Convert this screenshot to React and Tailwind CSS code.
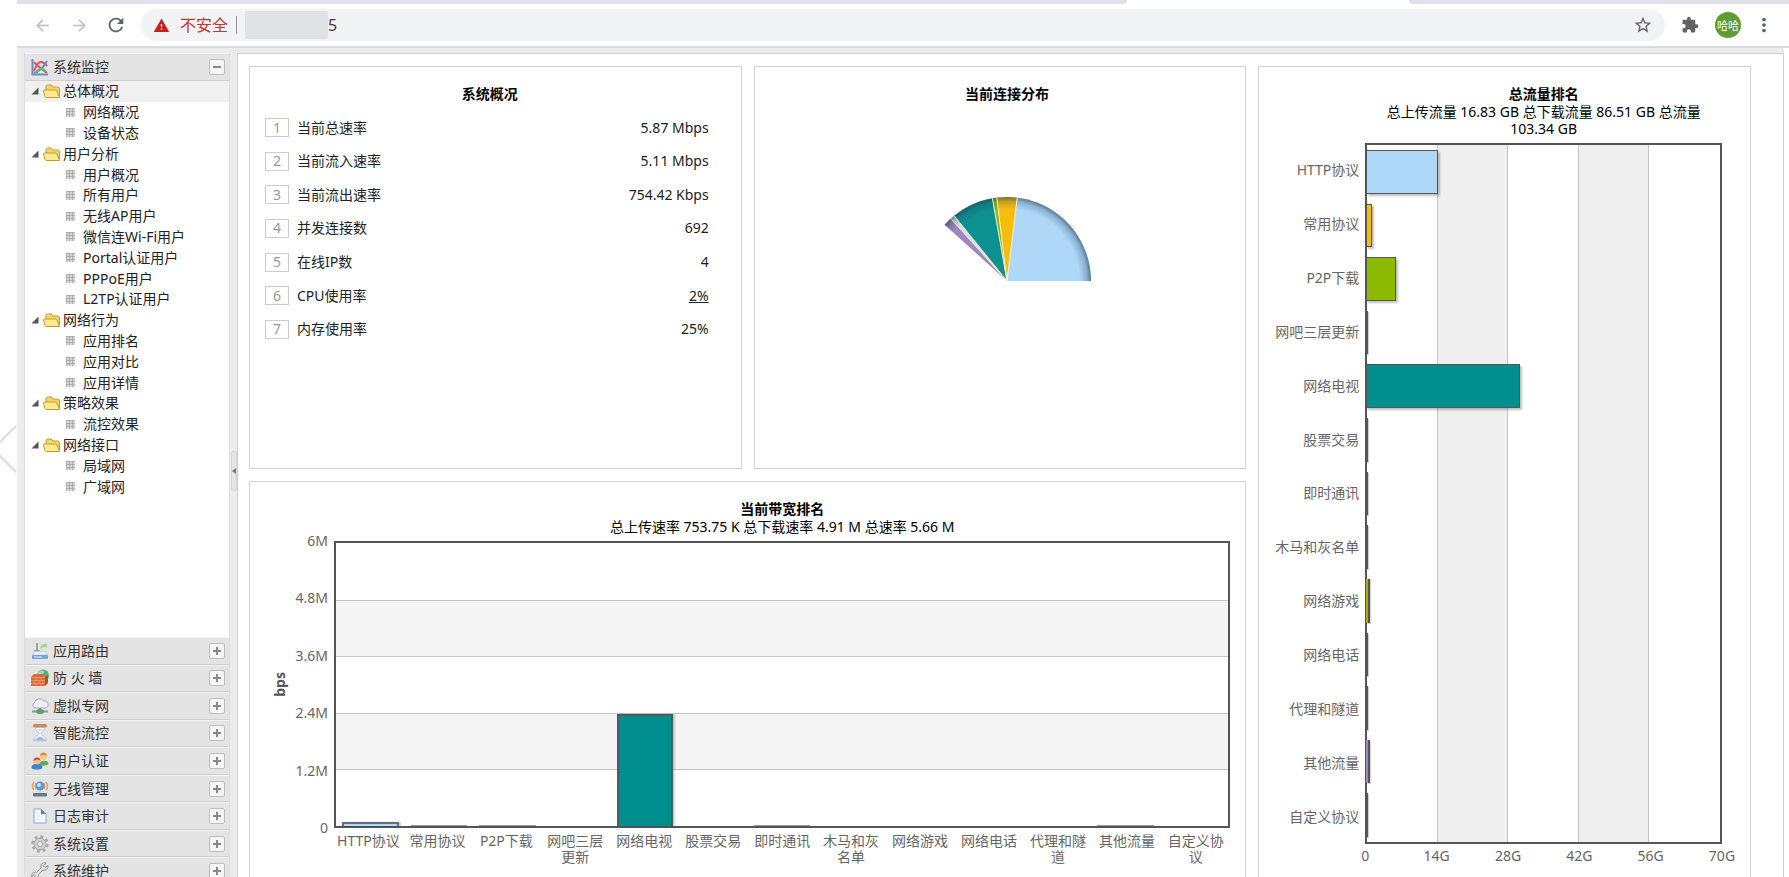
// src/App.jsx
//
// Router traffic console: browser toolbar on top, accordion menu on the
// left, overview cards and protocol charts on the right.

import {
  MdArrowBack, MdArrowForward, MdRefresh, MdWarning, MdStarOutline,
  MdExtension, MdMoreVert,
} from 'react-icons/md'

const TREE = [
  { label: '总体概况', folder: true, active: true },
  { label: '网络概况' },
  { label: '设备状态' },
  { label: '用户分析', folder: true },
  { label: '用户概况' },
  { label: '所有用户' },
  { label: '无线AP用户' },
  { label: '微信连Wi-Fi用户' },
  { label: 'Portal认证用户' },
  { label: 'PPPoE用户' },
  { label: 'L2TP认证用户' },
  { label: '网络行为', folder: true },
  { label: '应用排名' },
  { label: '应用对比' },
  { label: '应用详情' },
  { label: '策略效果', folder: true },
  { label: '流控效果' },
  { label: '网络接口', folder: true },
  { label: '局域网' },
  { label: '广域网' },
]

const SECTIONS = [
  { label: '应用路由', icon: RouteIcon },
  { label: '防 火 墙', icon: FirewallIcon },
  { label: '虚拟专网', icon: CloudIcon },
  { label: '智能流控', icon: HourglassIcon },
  { label: '用户认证', icon: UsersIcon },
  { label: '无线管理', icon: WirelessIcon },
  { label: '日志审计', icon: LogIcon },
  { label: '系统设置', icon: GearIcon },
  { label: '系统维护', icon: WrenchIcon },
]

const STATS = [
  ['当前总速率', '5.87 Mbps'],
  ['当前流入速率', '5.11 Mbps'],
  ['当前流出速率', '754.42 Kbps'],
  ['并发连接数', '692'],
  ['在线IP数', '4'],
  ['CPU使用率', '2%'],
  ['内存使用率', '25%'],
]

// rate in Mbps, total in GB
const PROTOCOLS = [
  { name: 'HTTP协议',     color: '#afd8f8', rate: 0.09, total: 14.2 },
  { name: '常用协议',     color: '#f6bd0f', rate: 0.01, total: 1.2 },
  { name: 'P2P下载',      color: '#8bba00', rate: 0.01, total: 5.8 },
  { name: '网吧三层更新', color: '#ff8e46', rate: 0,    total: 0.4 },
  { name: '网络电视',     color: '#008e8e', rate: 2.38, total: 30.5 },
  { name: '股票交易',     color: '#d64646', rate: 0,    total: 0.4 },
  { name: '即时通讯',     color: '#8e468e', rate: 0.01, total: 0.4 },
  { name: '木马和灰名单', color: '#588526', rate: 0,    total: 0.4 },
  { name: '网络游戏',     color: '#b3aa00', rate: 0,    total: 0.8 },
  { name: '网络电话',     color: '#008ed6', rate: 0,    total: 0.4 },
  { name: '代理和隧道',   color: '#9d080d', rate: 0,    total: 0.4 },
  { name: '其他流量',     color: '#a186be', rate: 0.01, total: 0.8 },
  { name: '自定义协议',   color: '#cc6600', rate: 0,    total: 0.4 },
]

const RATE_MAX = 6
const TOTAL_MAX = 70

// start / end in degrees, counter-clockwise from three o'clock
const SLICES = [
  { from: 0,   to: 83,  color: '#afd8f8' },
  { from: 83,  to: 97,  color: '#f6bd0f' },
  { from: 97,  to: 100, color: '#8bba00' },
  { from: 100, to: 129, color: '#0d9090' },
  { from: 129, to: 132, color: '#d9dfe2' },
  { from: 132, to: 138, color: '#a186be' },
]

export default function App() {
  return (
    <div className="flex h-screen overflow-hidden bg-white font-['Noto_Sans','Noto_Sans_CJK_SC',sans-serif] text-sm text-[#222]">
      <div className="flex w-[17px] shrink-0 items-center overflow-hidden pt-5">
        <svg width="17" height="48" viewBox="0 0 17 48" fill="none" stroke="#dcdcdc" strokeWidth="2">
          <path d="M16 1 L-7 24 L16 47" />
        </svg>
      </div>
      <div className="flex min-w-0 flex-1 flex-col">
        <BrowserBar />
        <div className="flex min-h-0 flex-1 bg-[#ececec] pt-[5px] pl-[7px]">
          <Sidebar />
          <Splitter />
          <Dashboard />
          <div className="-mt-[5px] w-[5px] shrink-0 bg-white" />
        </div>
      </div>
    </div>
  )
}

function BrowserBar() {
  return (
    <header className="shrink-0 border-b-2 border-[#d9dadc]">
      <div className="flex h-1 bg-white">
        <div className="flex-[1110] rounded-br-md bg-[#dee1e6]" />
        <div className="flex-[282]" />
        <div className="flex-[380] rounded-bl-md bg-[#dee1e6]" />
      </div>
      <div className="flex h-[42px] items-center pr-3.5 pl-4 text-[#5f6368]">
        <button type="button" aria-label="后退" className="mr-[18px] text-[#bbbdc0]"><MdArrowBack size={19} /></button>
        <button type="button" aria-label="前进" className="mr-4 text-[#bbbdc0]"><MdArrowForward size={19} /></button>
        <button type="button" aria-label="刷新"><MdRefresh size={22} /></button>
        <div className="ml-3.5 flex h-8 min-w-0 flex-1 items-center rounded-full bg-[#f1f3f4] px-3">
          <MdWarning size={17} className="shrink-0 text-[#c5221f]" />
          <span className="ml-2.5 shrink-0 text-base text-[#c5352b]">不安全</span>
          <span className="ml-2 h-[18px] w-px shrink-0 bg-[#8a8d91]" />
          <span className="ml-2 h-7 w-[83px] shrink-0 rounded-xs bg-[#e0e2e4]" />
          <input
            type="text"
            aria-label="地址"
            defaultValue="5"
            className="min-w-0 flex-1 bg-transparent text-base text-[#3c4043] outline-none"
          />
          <button type="button" aria-label="收藏"><MdStarOutline size={20} /></button>
        </div>
        <button type="button" aria-label="扩展程序" className="ml-4"><MdExtension size={18} /></button>
        <button type="button" className="ml-4 size-[26px] rounded-full bg-[#5f9c34] text-[11px] leading-none text-white">哈哈</button>
        <button type="button" aria-label="菜单" className="ml-3"><MdMoreVert size={22} /></button>
      </div>
    </header>
  )
}

function Sidebar() {
  return (
    <aside className="flex w-[206px] shrink-0 flex-col border-x border-[#dcdcdc] bg-white">
      <div className="grid h-7 shrink-0">
        <SectionHeader label="系统监控" icon={MonitorIcon} open />
      </div>
      <nav className="min-h-0 flex-1">
        <ul className="grid h-[416px] auto-rows-fr">
          {TREE.map((item) => (
            <li key={item.label} className={item.active ? 'bg-[#f0f0f0]' : ''}>
              <a href="#" className="flex h-full items-center leading-5">
                {item.folder ? (
                  <>
                    <svg width="8" height="8" viewBox="0 0 8 8" className="ml-1.5 shrink-0">
                      <path d="M7.5 .5V7.5H.5Z" fill="#555" />
                    </svg>
                    <FolderIcon />
                    <span className="ml-0.5">{item.label}</span>
                  </>
                ) : (
                  <>
                    <LeafIcon />
                    <span className="ml-2">{item.label}</span>
                  </>
                )}
              </a>
            </li>
          ))}
        </ul>
      </nav>
      <div className="-mb-2 grid h-[248px] shrink-0 auto-rows-fr">
        {SECTIONS.map((section) => (
          <SectionHeader key={section.label} {...section} />
        ))}
      </div>
    </aside>
  )
}

function SectionHeader({ label, icon: Icon, open }) {
  return (
    <div className="flex items-center border-t border-b border-t-[#f3f3f3] border-b-[#cfcfcf] bg-[#e4e4e4] pr-1 pl-1.5">
      <Icon />
      <h2 className="ml-1 flex-1 leading-5 text-[#333]">{label}</h2>
      <button
        type="button"
        aria-label={open ? `收起${label}` : `展开${label}`}
        className="flex size-4 items-center justify-center rounded-xs border border-[#bdbdbd] bg-[#f6f6f6]"
      >
        <svg width="8" height="8" viewBox="0 0 8 8" stroke="#888" strokeWidth="2">
          <path d={open ? 'M0 4H8' : 'M0 4H8M4 0V8'} />
        </svg>
      </button>
    </div>
  )
}

function Splitter() {
  return (
    <div className="flex w-[7px] shrink-0 items-center justify-center pt-3">
      <button type="button" aria-label="折叠菜单" className="flex h-10 w-1.5 items-center rounded-xs border border-[#d4d4d4] bg-[#e6e6e6]">
        <svg width="4" height="6" viewBox="0 0 4 6"><path d="M4 0V6L0 3Z" fill="#777" /></svg>
      </button>
    </div>
  )
}

function Dashboard() {
  return (
    <main className="min-w-0 flex-1 overflow-hidden border border-b-0 border-[#d0d0d0] bg-white pt-3 pr-8 pl-[11px]">
      <div className="grid grid-cols-3 grid-rows-[403px_auto] gap-3">
        <OverviewCard />
        <ConnectionCard />
        <TotalCard />
        <BandwidthCard />
      </div>
    </main>
  )
}

function OverviewCard() {
  return (
    <section className="border border-[#d3d3d3] pt-[18px] pr-8 pl-[15px]">
      <h3 className="pl-1.5 text-center leading-[18px] font-bold text-black">系统概况</h3>
      <table className="mt-2 h-[235px] w-full">
        <tbody>
          {STATS.map(([label, value], i) => (
            <tr key={label}>
              <td className="w-8">
                <span className="flex h-[19px] w-6 items-center justify-center border border-[#ccc] text-[#999]">{i + 1}</span>
              </td>
              <th scope="row" className="text-left font-normal">{label}</th>
              <td className="text-right">
                {label === 'CPU使用率' ? <a href="#" className="underline">{value}</a> : value}
              </td>
            </tr>
          ))}
        </tbody>
      </table>
    </section>
  )
}

const polar = (deg, r) => {
  const a = (deg * Math.PI) / 180
  return `${(r * Math.cos(a)).toFixed(2)} ${(-r * Math.sin(a)).toFixed(2)}`
}

const wedge = (from, to, r) => `M0 0L${polar(from, r)}A${r} ${r} 0 0 0 ${polar(to, r)}Z`

function ConnectionCard() {
  return (
    <section className="flex flex-col border border-[#d3d3d3] pt-[18px] pl-3.5">
      <h3 className="text-center leading-[18px] font-bold text-black">当前连接分布</h3>
      <div className="flex flex-1 items-center justify-center pb-2.5">
        <svg width="170" height="170" viewBox="-85 -85 170 170">
          <defs>
            <radialGradient id="rim" gradientUnits="userSpaceOnUse" cx="0" cy="0" r="84">
              <stop offset=".86" stopColor="#1d3c50" stopOpacity="0" />
              <stop offset=".95" stopColor="#1d3c50" stopOpacity=".25" />
              <stop offset="1" stopColor="#1d3c50" stopOpacity=".6" />
            </radialGradient>
          </defs>
          {SLICES.map(({ from, to, color }) => (
            <path key={from} d={wedge(from, to, 84)} fill={color} />
          ))}
          <path d={wedge(0, 138, 84)} fill="url(#rim)" />
          {SLICES.slice(1).map(({ from }) => (
            <path key={from} d={`M0 0L${polar(from, 84)}`} stroke="#f4f1d8" />
          ))}
        </svg>
      </div>
    </section>
  )
}

function BandwidthCard() {
  return (
    <section className="col-span-2 border border-[#d3d3d3] pt-[18px] pr-[15px] pb-10">
      <div className="grid grid-cols-[84px_1fr]">
        <div className="col-start-2 text-center leading-[17px] text-black">
          <h3 className="leading-[18px] font-bold">当前带宽排名</h3>
          <p>总上传速率 753.75 K 总下载速率 4.91 M 总速率 5.66 M</p>
        </div>
        <div className="col-start-1 mt-1.5 flex h-[287px] items-center pl-5 text-[#666]">
          <span className="rotate-180 leading-5 font-bold text-[#555] [writing-mode:vertical-rl]">bps</span>
          <div className="-my-2 flex flex-1 flex-col justify-between self-stretch pr-1.5 text-right leading-4">
            {['6M', '4.8M', '3.6M', '2.4M', '1.2M', '0'].map((tick) => <span key={tick}>{tick}</span>)}
          </div>
        </div>
        <div className="mt-1.5 grid h-[287px] border-2 border-[#555]">
          <div className="col-start-1 row-start-1 grid grid-rows-5">
            {[0, 1, 2, 3, 4].map((i) => (
              <div key={i} className={`${i % 2 ? 'bg-[#f4f4f4]' : ''} ${i ? 'border-t border-[#c4c4c4]' : ''}`} />
            ))}
          </div>
          <div className="col-start-1 row-start-1 grid grid-cols-13 items-end">
            {PROTOCOLS.map(({ name, color, rate }) => (
              <div key={name} className="flex h-full items-end px-1.5">
                {rate > 0 && (
                  <div
                    className={rate > 0.05
                      ? 'w-full border-2 border-b-0 border-[#555]/80 shadow-[2px_0_2px_rgba(0,0,0,0.2)]'
                      : 'w-full border-t border-[#999]'}
                    style={{ height: `${(rate / RATE_MAX) * 100}%`, backgroundColor: color }}
                  />
                )}
              </div>
            ))}
          </div>
        </div>
        <div className="col-start-2 mt-[5px] grid grid-cols-13 text-center leading-4 text-[#666]">
          {PROTOCOLS.map(({ name }) => <span key={name} className="px-0.5">{name}</span>)}
        </div>
      </div>
    </section>
  )
}

function TotalCard() {
  return (
    <section className="row-span-2 border border-[#d3d3d3] pt-[18px] pr-7">
      <div className="grid grid-cols-[106px_1fr]">
        <div className="col-start-2 text-center leading-[17px] text-black">
          <h3 className="leading-[18px] font-bold">总流量排名</h3>
          <p className="px-5">总上传流量 16.83 GB 总下载流量 86.51 GB 总流量 103.34 GB</p>
        </div>
        <div className="col-start-1 mt-1.5 grid h-[701px] auto-rows-fr items-center pr-1.5 text-right whitespace-nowrap text-[#666]">
          {PROTOCOLS.map(({ name }) => <span key={name}>{name}</span>)}
        </div>
        <div className="mt-1.5 grid h-[701px] border-2 border-[#555]">
          <div className="col-start-1 row-start-1 grid grid-cols-5">
            {[0, 1, 2, 3, 4].map((i) => (
              <div key={i} className={`${i % 2 ? 'bg-[#efefef]' : ''} ${i < 4 ? 'border-r border-[#c4c4c4]' : ''}`} />
            ))}
          </div>
          <div className="col-start-1 row-start-1 -ml-px grid auto-rows-fr">
            {PROTOCOLS.map(({ name, color, total }) => (
              <div key={name} className="py-[5px]">
                <div
                  className={total > 1
                    ? 'h-full border border-[#555] shadow-[2px_2px_2px_rgba(0,0,0,0.25)]'
                    : 'h-full border-r-2 border-[#555] shadow-[1px_1px_1px_rgba(0,0,0,0.2)]'}
                  style={{ width: `${(total / TOTAL_MAX) * 100}%`, backgroundColor: color }}
                />
              </div>
            ))}
          </div>
        </div>
        <div className="col-start-2 -mx-5 flex justify-between text-center leading-6 text-[#666]">
          {['0', '14G', '28G', '42G', '56G', '70G'].map((tick) => <span key={tick} className="w-10">{tick}</span>)}
        </div>
      </div>
    </section>
  )
}

/* Icons */

function MenuIcon({ children }) {
  return <svg width="18" height="18" viewBox="0 0 18 18" fill="none" className="shrink-0">{children}</svg>
}

function MonitorIcon() {
  return (
    <MenuIcon>
      <path d="M1.5 1V16.5H17" stroke="#6d8fc0" strokeWidth="2" />
      <path d="M3 13C7 3 10 1 16 8" stroke="#e0505c" strokeWidth="2" />
      <path d="M3 4C6 8 10 10 16 15" stroke="#e0505c" strokeWidth="2" />
      <path d="M3 15C8 14 12 10 16 3" stroke="#5b8fd6" strokeWidth="2" />
      <path d="M4 16C7 10 12 9 15 14" stroke="#67b96c" strokeWidth="2" />
    </MenuIcon>
  )
}

function RouteIcon() {
  return (
    <MenuIcon>
      <path d="M6 1V9M3 9H9" stroke="#7c9a8c" strokeWidth="1.5" />
      <path d="M9 6C10 2 13 1 16 2V6C14 4 12 5 10 7Z" fill="#a3dc7c" />
      <path d="M3.5 9.5H14.5L16.5 13H1.5Z" fill="#eef5fb" stroke="#b8cfe0" />
      <rect x="1" y="13" width="16" height="4" rx="1" fill="#6ba8dc" />
      <path d="M3 15H11" stroke="#e8f3fc" />
    </MenuIcon>
  )
}

function FirewallIcon() {
  return (
    <MenuIcon>
      <circle cx="12" cy="6.5" r="6" fill="#58b368" />
      <path d="M7 4C9 1 12 1 13 3C12 6 9 5 8 8Z" fill="#a9d3ee" />
      <path d="M0 8L3 5H11L14 8V17H0Z" fill="#dd6a39" />
      <path d="M0 8.5H14M0 11.5H14M0 14.5H14M5 8.5V11.5M10 8.5V11.5M3 11.5V14.5M8 11.5V14.5M12 11.5V14.5M5 14.5V17M10 14.5V17" stroke="#f0ab83" strokeOpacity=".6" />
      <path d="M14 8L17 6V14L14 17Z" fill="#b84f29" />
    </MenuIcon>
  )
}

function CloudIcon() {
  return (
    <MenuIcon>
      <path d="M4 11A3 3 0 0 1 3.5 5.5A5 5 0 0 1 12.5 4A3.5 3.5 0 0 1 14.5 11Z" fill="#efedf7" stroke="#a5a2bd" />
      <path d="M9 11V14M1 14.5H17" stroke="#8c9a92" strokeWidth="2" />
      <ellipse cx="9" cy="14.5" rx="4" ry="2.5" fill="#59a35c" />
    </MenuIcon>
  )
}

function HourglassIcon() {
  return (
    <MenuIcon>
      <path d="M4 3C4 7 8 8 8 9.5C8 11 3 12 3 16H15C15 12 10 11 10 9.5C10 8 14 7 14 3Z" fill="#eef4fb" stroke="#b9c6d6" />
      <path d="M5 16C6 12 12 12 13 16Z" fill="#7fb2ea" />
      <path d="M6 5H12L9 8Z" fill="#cfe0f4" />
      <rect x="2" y="0" width="14" height="3.5" rx="1.5" fill="#c98d57" />
      <rect x="2" y="15.5" width="14" height="2" rx="1" fill="#b9c9dc" />
    </MenuIcon>
  )
}

function UsersIcon() {
  return (
    <MenuIcon>
      <path d="M8 13C8 8 17.5 7 17.5 12C16 14 10 14 8 13Z" fill="#5fae4c" />
      <circle cx="12.5" cy="4.5" r="3.5" fill="#f5c893" />
      <path d="M9 4A3.5 3.5 0 0 1 16 4C14 2.5 12 3 9 4Z" fill="#d9912c" />
      <path d="M.5 16C0 10 11.5 10 11.5 16C9 18 3 18 .5 16Z" fill="#3f82d4" />
      <circle cx="6" cy="9" r="3.5" fill="#f2bd91" />
      <path d="M2.5 9A3.5 3.5 0 0 1 9.5 9C8 7 5 7 2.5 9Z" fill="#b4532f" />
    </MenuIcon>
  )
}

function WirelessIcon() {
  return (
    <MenuIcon>
      <path d="M3 2C1 4 1 8 3 10M15 2C17 4 17 8 15 10M5 3C4 5 4 7 5 9M13 3C14 5 14 7 13 9" stroke="#ee9c4f" strokeWidth="1.5" />
      <circle cx="9" cy="6" r="4.5" fill="#5b9bd8" />
      <circle cx="8" cy="5" r="2" fill="#c5e1f7" />
      <path d="M5 11H13L14 13H4Z" fill="#d4d9df" />
      <rect x="2" y="13" width="14" height="3.5" rx="1" fill="#66788c" />
    </MenuIcon>
  )
}

function LogIcon() {
  return (
    <MenuIcon>
      <path d="M3 2H10L15 7V16H3Z" fill="#f4f9fe" stroke="#86a7cc" />
      <path d="M10 2L15 7H10Z" fill="#4f83bd" />
      <path d="M5 6H8M5 9H12M5 12H12" stroke="#dbe7f3" />
    </MenuIcon>
  )
}

function GearIcon() {
  return (
    <MenuIcon>
      <circle cx="9" cy="9" r="7.5" stroke="#a9a9a9" strokeWidth="2.5" strokeDasharray="3 2.9" />
      <circle cx="9" cy="9" r="6" fill="#cfcfcf" stroke="#a4a4a4" />
      <circle cx="9" cy="9" r="2.5" fill="#eee" stroke="#a4a4a4" />
    </MenuIcon>
  )
}

function WrenchIcon() {
  return (
    <MenuIcon>
      <path d="M10 3C11 .5 14 .5 15 1L12.5 4L14 5.500L17 3.500C17.500 7 14.500 9 12 8L7.500 12.500C8 15.500 5 17.500 2 16.500L4.500 14L3 12.500L.5 14.500C0 11.500 3 9.500 5.500 10.500L10 6Z" fill="#e3e3e3" stroke="#8f8f8f" />
    </MenuIcon>
  )
}

function FolderIcon() {
  return (
    <svg width="18" height="16" viewBox="0 0 18 16" fill="none" className="ml-1 shrink-0">
      <path d="M3 12V3.5Q3 2 4.5 2H8L10 4H14.5Q16.5 4 16.5 6V13Z" fill="#f3d568" stroke="#c59a2c" />
      <path d="M.5 8Q.5 7 1.5 7H12.5L14 8L16.5 14.5H3.5Q2.5 14.5 2 13.5Z" fill="#fdeb92" stroke="#c59a2c" />
    </svg>
  )
}

function LeafIcon() {
  return (
    <svg width="9" height="9" viewBox="0 0 9 9" className="ml-[41px] shrink-0">
      <rect width="9" height="9" fill="#d8d8d8" />
      <path d="M0 .5H9M0 3.5H9M0 6.5H9M.5 0V9M3.5 0V9M6.5 0V9" stroke="#9f9f9f" strokeOpacity=".7" />
    </svg>
  )
}
